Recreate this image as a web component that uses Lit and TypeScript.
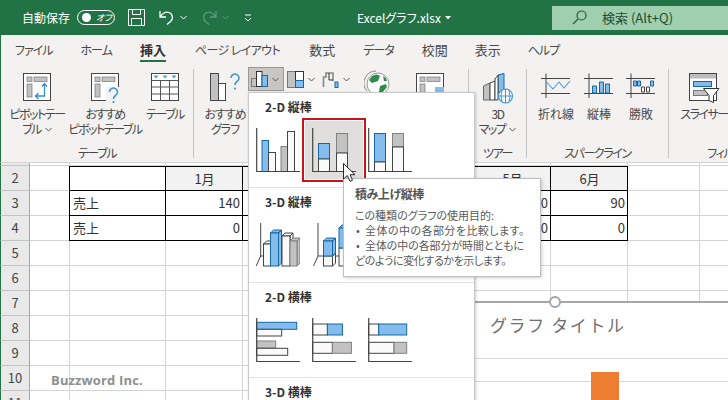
import { LitElement, html, css, svg } from 'lit';
import { customElement } from 'lit/decorators.js';

type Bar = [number, number, number, number, string];

const fills: Record<string, [string, string]> = {
  b: ['#84bcee', '#16699f'],
  g: ['#c2c2c2', '#808080'],
  w: ['#fafafa', '#444444'],
};

const flat = (bars: Bar[]) => html`
  <svg class="chart" width="44" height="44" viewBox="0 0 44 44">
    ${bars.map(([x, y, w, h, k]) => svg`<rect x=${x} y=${y} width=${w} height=${h} fill=${fills[k][0]} stroke=${fills[k][1]} stroke-width="1"/>`)}
    <path d="M.7 0V43.700H44" fill="none" stroke="#444" stroke-width="1.2"/>
  </svg>
`;

const box3d = ([x, y, w, h, k]: Bar) => svg`
  <path d="M${x} ${y}l3 -3h${w}l-3 3zM${x + w} ${y}l3 -3v${h}l-3 3z" fill=${fills[k][0]} stroke=${fills[k][1]} stroke-width="1"/>
  <rect x=${x} y=${y} width=${w} height=${h} fill=${fills[k][0]} stroke=${fills[k][1]} stroke-width="1"/>
`;

const solid = (ax: number, bars: Bar[]) => html`
  <svg class="chart" width="44" height="44" viewBox="0 0 44 44">
    <path d="M${ax} 0V33L${ax - 4.5} 43M${ax} 33H44" fill="none" stroke="#444" stroke-width="1"/>
    ${bars.map(box3d)}
  </svg>
`;

const chevron = html`<svg class="chev" width="7" height="5" viewBox="0 0 7 5"><path d="M.5 1l3 3 3-3" fill="none" stroke="#555" stroke-width="1"/></svg>`;

const frame = svg`
  <rect x=".5" y=".5" width="27" height="27" fill="#fff" stroke="#444"/>
  <rect x="4" y="4" width="5" height="4.500" fill="#c2c2c2" stroke="#777" stroke-width=".7"/>
  <rect x="11" y="4" width="13" height="4.500" fill="#c2c2c2" stroke="#777" stroke-width=".7"/>
  <rect x="4" y="11" width="5" height="13" fill="#c2c2c2" stroke="#777" stroke-width=".7"/>
`;

const icons = {
  pivot: html`<svg width="29" height="28" viewBox="0 0 29 28">${frame}<path d="M13 23H21.500V11M19 13.500l2.500-3 2.500 3M15.500 20l-3 3 3 3" fill="none" stroke="#2f8fd0" stroke-width="1.3"/></svg>`,
  recPivot: html`<svg width="29" height="32" viewBox="0 0 29 32">${frame}<rect x="15" y="14" width="13" height="14" fill="#f3f2f1"/><path d="M18.500 19a4 4 0 1 1 6 3.500c-1.500 1-2 2-2 3.500" fill="none" stroke="#3f97d4" stroke-width="1.6"/><circle cx="22.500" cy="29" r="1.100" fill="#3f97d4"/></svg>`,
  table: html`<svg width="29" height="28" viewBox="0 0 29 28">
    <rect x=".5" y=".5" width="27" height="27" fill="#fff" stroke="#444"/>
    <path d="M.5 7.500h27M.5 14h27M.5 21h27M9.500 7.500V28M18.500 7.500V28" stroke="#555" fill="none"/>
    <path d="M2.500 2.500h5l-2.500 3zM11.500 2.500h5l-2.500 3zM20.500 2.500h5l-2.500 3z" fill="#4d9cd2"/>
  </svg>`,
  recChart: html`<svg width="31" height="28" viewBox="0 0 31 28">
    <rect x=".5" y=".5" width="8" height="27" fill="#c2c2c2" stroke="#444"/>
    <rect x="8.500" y="10.500" width="7" height="17" fill="#fff" stroke="#444"/>
    <path d="M21 5a4 4 0 1 1 6 3.500c-1.500 1-2 2-2 3.500" fill="none" stroke="#3f97d4" stroke-width="1.6"/><circle cx="25" cy="15.500" r="1.100" fill="#3f97d4"/>
  </svg>`,
  column: html`<svg width="17" height="16" viewBox="0 0 17 16">
    <rect x=".5" y="7.500" width="5" height="8" fill="#c2c2c2" stroke="#777"/>
    <rect x="5.500" y=".5" width="5.500" height="15" fill="#fff" stroke="#333"/>
    <rect x="11" y="4.500" width="5.500" height="11" fill="#84bcee" stroke="#16699f"/>
  </svg>`,
  hierarchy: html`<svg width="17" height="17" viewBox="0 0 17 17">
    <rect x=".5" y=".5" width="8" height="16" fill="#c2c2c2" stroke="#777"/>
    <rect x="8.500" y=".5" width="8" height="9" fill="#fff" stroke="#333"/>
    <rect x="8.500" y="9.500" width="8" height="7" fill="#84bcee" stroke="#16699f"/>
  </svg>`,
  waterfall: html`<svg width="17" height="17" viewBox="0 0 17 17">
    <path d="M1.500 16V6H4V2H11V10" fill="none" stroke="#888" stroke-width="1.6"/>
    <path d="M7 2V9H11" fill="none" stroke="#333"/>
    <rect x="13" y="11" width="3" height="5.500" fill="#84bcee" stroke="#16699f"/>
  </svg>`,
  globe: html`<svg width="26" height="26" viewBox="0 0 26 26">
    <path d="M3 21A12 12 0 0 1 12 1" fill="none" stroke="#888"/>
    <circle cx="14" cy="14" r="11" fill="#fff" stroke="#999"/>
    <path d="M8 6q5-3 8 0l-2 5-6 2-3-3zM16 16l6-2 1 3-5 6-3-1zM19 6l3 2 1 3-3 0z" fill="#2f8b4a"/>
  </svg>`,
  mapChart: html`<svg width="29" height="28" viewBox="0 0 29 28">${frame}<rect x="19" y="14" width="9" height="14" fill="#84bcee"/></svg>`,
  map3d: html`<svg width="32" height="31" viewBox="0 0 32 31">
    <path d="M1.500 13L8 10V27H1.500z" fill="#c2c2c2" stroke="#666"/>
    <path d="M8 10L13 8V27H8z" fill="#fff" stroke="#444"/>
    <path d="M16 2L22 .5V20H16z" fill="#84bcee" stroke="#16699f"/>
    <path d="M13 6L16 2V27H13z" fill="#fff" stroke="#444"/>
    <circle cx="23.500" cy="23" r="7" fill="#fff" stroke="#3f97d4" stroke-width="1.2"/>
    <path d="M16.500 23h14M23.500 16v14M20 17.500q-2 5.500 0 11M27 17.500q2 5.500 0 11" fill="none" stroke="#3f97d4"/>
  </svg>`,
  line: html`<svg width="30" height="26" viewBox="0 0 30 26">
    <path d="M0 5.500H29M0 20.500H29M5 .5V25" fill="none" stroke="#444"/>
    <path d="M5.500 9L12 16 18 9 23 15 29 8" fill="none" stroke="#4d9cd2" stroke-width="1.1"/>
  </svg>`,
  spark: html`<svg width="30" height="26" viewBox="0 0 30 26">
    <path d="M0 5.500H29M0 20.500H29M5 .5V25" fill="none" stroke="#444"/>
    <path d="M8.500 13h4v7h-4zM15.500 9h4v11h-4zM21.500 11h4v9h-4z" fill="#84bcee" stroke="#16699f"/>
  </svg>`,
  winloss: html`<svg width="30" height="26" viewBox="0 0 30 26">
    <path d="M0 5.500H29M0 20.500H29M5 .5V25" fill="none" stroke="#444"/>
    <path d="M7.500 8h3v5h-3zM11.500 8h3v5h-3zM24.500 8h3v5h-3z" fill="#84bcee" stroke="#16699f"/>
    <path d="M15.500 14h3v5h-3zM20.500 14h3v5h-3z" fill="#fff" stroke="#444"/>
  </svg>`,
  slicer: html`<svg width="31" height="30" viewBox="0 0 31 30">
    <rect x=".5" y=".5" width="27" height="27" fill="#fff" stroke="#444"/>
    <rect x="1" y="1" width="26" height="4.500" fill="#bdbdbd"/>
    <rect x="4.500" y="8.500" width="18" height="5" fill="#84bcee" stroke="#16699f"/>
    <rect x="4.500" y="17.500" width="14" height="5" fill="#c2c2c2" stroke="#777"/>
    <path d="M14.500 15.500H30L24.500 22.500V29.500L20 27.500V22.500z" fill="#fff" stroke="#333"/>
  </svg>`,
};

const sections = [
  {
    title: '2-D 縦棒',
    items: [
      flat([[6, 12.5, 6.5, 31, 'b'], [12.5, 24.5, 7, 19, 'w'], [25, 18.5, 6.5, 25, 'g'], [31.5, 3.5, 7, 40, 'w']]),
      flat([[6.5, 15.5, 11, 15.5, 'b'], [6.5, 31, 11, 12.5, 'w'], [24.5, 5.5, 11, 19.5, 'g'], [24.5, 25, 11, 18.5, 'w']]),
      flat([[6.5, 5.5, 11, 28.5, 'b'], [6.5, 34, 11, 9.5, 'w'], [24.5, 5.5, 11, 13.5, 'g'], [24.5, 19, 11, 24.5, 'w']]),
    ],
  },
  {
    title: '3-D 縦棒',
    items: [
      solid(4.7, [[7.5, 21, 7, 22, 'w'], [14.5, 10, 8, 33, 'b'], [26, 13, 8, 30, 'w'], [34, 18, 7, 25, 'g']]),
      solid(6, [[11.5, 33, 9, 10, 'w'], [11.5, 18, 9, 15, 'b'], [27, 25, 9, 18, 'w'], [27, 5, 9, 20, 'b']]),
      solid(6, [[11.5, 33, 9, 10, 'w'], [11.5, 8, 9, 25, 'b'], [27, 20, 9, 23, 'w'], [27, 8, 9, 12, 'g']]),
    ],
  },
  {
    title: '2-D 横棒',
    items: [
      flat([[.7, 4.3, 40, 7, 'b'], [.7, 11.3, 25, 6.7, 'w'], [.7, 23, 19, 7, 'g'], [.7, 30.3, 31, 7, 'w']]),
      flat([[.7, 6, 14.7, 11, 'w'], [15.4, 6, 15, 11, 'b'], [.7, 24.3, 19.7, 11, 'w'], [20.4, 24.3, 19, 11, 'g']]),
      flat([[.7, 6, 10, 11, 'w'], [10.7, 6, 28, 11, 'b'], [.7, 24.3, 25.4, 11, 'w'], [26.1, 24.3, 12.6, 11, 'g']]),
    ],
  },
  { title: '3-D 横棒', items: [] },
];

const tabs = [
  ['ファイル', 'kana'],
  ['ホーム', 'kana'],
  ['挿入', 'kanji active'],
  ['ページ レイアウト', 'kana page'],
  ['数式', 'kanji'],
  ['データ', 'kana'],
  ['校閲', 'kanji'],
  ['表示', 'kanji tight'],
  ['ヘルプ', 'kana tight'],
];

const columns = ['A', 'B', 'C', 'D', 'E', 'F', 'G', 'H', 'I', 'J'];
const table: Record<number, string[]> = {
  2: ['', '1月', '2月', '3月', '4月', '5月', '6月'],
  3: ['売上', '140', '', '', '', '0', '90'],
  4: ['売上', '0', '', '', '', '0', '0'],
};

@customElement('app-root')
export class AppRoot extends LitElement {
  static styles = css`
    :host {
      display: block;
      width: 728px;
      height: 400px;
      position: relative;
      overflow: hidden;
      background: #fff;
      color: #484848;
      font-family: 'Noto Sans CJK JP', 'Noto Sans', sans-serif;
      font-size: 12px;
      font-feature-settings: 'palt';
    }
    .titlebar {
      height: 35px;
      background: #217346;
      color: #fff;
      display: flex;
      align-items: center;
      white-space: nowrap;
    }
    .autosave { margin-left: 22px; width: 55px; }
    .toggle {
      width: 38px;
      height: 15px;
      box-sizing: border-box;
      border: 1px solid #fff;
      border-radius: 8px;
      display: flex;
      align-items: center;
      gap: 5px;
      padding-left: 4px;
      font-size: 9px;
      font-style: italic;
    }
    .toggle i { width: 9px; height: 9px; border-radius: 50%; background: #fff; }
    .quick { display: flex; align-items: center; margin-left: 13px; }
    .save { margin-right: 13px; }
    .undo-caret { margin-left: 5px; margin-right: 14px; }
    .redo-caret { margin-left: 4px; margin-right: 15px; }
    .filename { margin-left: 105px; width: 88px; }
    .search {
      margin-left: auto;
      width: 176px;
      height: 24px;
      background: #9fcfae;
      color: #1e4d33;
      display: flex;
      align-items: center;
      gap: 15px;
      padding-left: 20px;
      box-sizing: border-box;
      font-size: 13px;
    }
    .tabs {
      height: 29px;
      background: #f3f2f1;
      display: flex;
      gap: 28px;
      padding-left: 14px;
      border-left: 1px solid #217346;
      white-space: nowrap;
      line-height: 29px;
    }
    .tab { position: relative; height: 29px; }
    .tab.kana { letter-spacing: -1px; }
    .tab.kanji { font-size: 13px; }
    .tab.page { letter-spacing: -0.6px; padding: 0 1px; }
    .tab.tight { margin-left: -1px; }
    .tab.active { font-weight: 700; color: #333; }
    .tab.active::after {
      content: '';
      position: absolute;
      left: 0;
      right: 0;
      bottom: 2px;
      height: 2px;
      background: #217346;
    }
    .ribbon {
      height: 98px;
      background: #f3f2f1;
      display: flex;
      border-left: 1px solid #217346;
      border-bottom: 1px solid #d6d4d2;
    }
    .group { display: flex; flex-direction: column; height: 98px; flex: none; }
    .group-items { flex: 1; display: flex; min-height: 0; }
    .group-label { height: 18px; line-height: 17px; text-align: center; white-space: nowrap; letter-spacing: -1.4px; }
    .sep { width: 1px; margin: 5px 0 4px; background: #c8c6c4; flex: none; }
    .g1 { width: 192px; }
    .g1 .group-items { padding-left: 6px; }
    .g2 { width: 274px; }
    .g2 .group-items { padding-left: 7px; }
    .g3 { width: 57px; }
    .g4 { width: 141px; }
    .g4 .group-items { padding-left: 10px; gap: 6px; }
    .g5 { width: 122px; }
    .g5 .group-items { padding-left: 6px; }
    .btn {
      flex: none;
      display: flex;
      flex-direction: column;
      align-items: center;
      padding-top: 9px;
      line-height: 15px;
      white-space: nowrap;
      box-sizing: border-box;
      letter-spacing: -1.5px;
    }
    .btn.plain { letter-spacing: 0; }
    .btn.sparse { letter-spacing: -1px; }
    .btn svg { display: block; }
    .w36 { width: 36px; }
    .w38 { width: 38px; }
    .w44 { width: 44px; }
    .w48 { width: 48px; }
    .w52 { width: 52px; }
    .w54 { width: 54px; }
    .w57 { width: 57px; }
    .w58 { width: 58px; }
    .w60 { width: 60px; }
    .w76 { width: 76px; }
    .globe { padding-top: 6px; }
    .icon { height: 33px; display: flex; justify-content: center; }
    .btn .chev { display: inline-block; margin-left: 4px; vertical-align: 2px; }
    .small-row { display: flex; gap: 3px; padding-top: 3px; height: 28px; align-items: flex-start; flex: none; margin-left: -1px; width: 102px; }
    .small {
      height: 24px;
      box-sizing: border-box;
      display: flex;
      align-items: center;
      gap: 4px;
    }
    .small.on { width: 36px; padding-left: 2px; background: #c8c6c4; border: 1px solid #9b9997; }
    .small.far { margin-left: 4px; }
    .sheet {
      display: grid;
      grid-template-columns: 30px 40px 96px 77px 77px 77px 77px 77px 77px 72px 29px;
      grid-template-rows: 3px repeat(10, 25px);
      font-size: 13px;
      font-feature-settings: normal;
      line-height: 24px;
      color: #333;
    }
    .cell {
      box-sizing: border-box;
      border-right: 1px solid #d4d4d4;
      border-bottom: 1px solid #d4d4d4;
      padding: 0 2px 0 3px;
      overflow: hidden;
      white-space: nowrap;
    }
    .head {
      background: #e9e9e9;
      border-left: 1px solid #217346;
      border-right: 1px solid #a6a6a6;
      border-bottom: 1px solid #c4c4c4;
      text-align: center;
      color: #444;
      padding: 0;
    }
    .num { text-align: right; }
    .cal { text-align: center; background: #f2f2f2; }
    .tbl { border-right: 1px solid #000; border-bottom: 1px solid #000; }
    .tbl.first { border-left: 1px solid #000; margin-left: -1px; }
    .tbl.top { border-top: 1px solid #000; line-height: 23px; }
    .mark {
      position: absolute;
      left: 51px;
      top: 371px;
      font-family: 'Open Sans', sans-serif;
      font-weight: 700;
      font-size: 13px;
      letter-spacing: 0.15px;
      line-height: 18px;
      color: #8f8f8f;
      font-feature-settings: normal;
    }
    .chart-object {
      position: absolute;
      left: 400px;
      right: 0;
      top: 301px;
      bottom: 0;
      background: #fff;
      border-top: 2px solid #a6a6a6;
    }
    .handle {
      position: absolute;
      left: 149px;
      top: -7px;
      width: 12px;
      height: 12px;
      box-sizing: border-box;
      border: 2px solid #a6a6a6;
      border-radius: 50%;
      background: #fff;
    }
    .chart-title {
      padding: 9px 0 0 90px;
      height: 55px;
      box-sizing: border-box;
      font-size: 17px;
      letter-spacing: 1.6px;
      line-height: 26px;
      color: #707070;
      white-space: nowrap;
      font-feature-settings: normal;
    }
    .plot {
      height: 44px;
      background: repeating-linear-gradient(#d9d9d9 0 1px, transparent 1px 22.5px);
      position: relative;
    }
    .bar {
      position: absolute;
      left: 191px;
      top: 14px;
      bottom: 0;
      width: 28px;
      background: #ed7d31;
    }
    .menu {
      position: absolute;
      left: 248px;
      top: 92px;
      width: 227px;
      bottom: -2px;
      background: #fff;
      border: 1px solid #c8c8c8;
      box-sizing: border-box;
      box-shadow: 1px 1px 3px rgba(0, 0, 0, 0.2);
    }
    .section {
      height: 95px;
      box-sizing: border-box;
      padding: 6px 0 0 7px;
      border-bottom: 1px solid #e1e1e1;
    }
    .section h3 {
      margin: 0 0 14px 9px;
      font-size: 12px;
      line-height: 15px;
      font-weight: 700;
      color: #333;
    }
    .charts { display: flex; gap: 12px; }
    .chart { display: block; }
    .slot { width: 44px; height: 44px; position: relative; z-index: 0; }
    .slot.sel::before {
      content: '';
      position: absolute;
      inset: -10px;
      z-index: -1;
      background: #e0dfde;
      border: 2.5px solid #c9141c;
      box-shadow: inset 0 0 0 1px #fff;
    }
    .cursor { position: absolute; left: 343px; top: 163px; z-index: 3; }
    .tip {
      position: absolute;
      left: 343px;
      top: 178px;
      width: 198px;
      height: 99px;
      box-sizing: border-box;
      background: #fff;
      border: 1px solid #bfbfbf;
      box-shadow: 1px 1px 3px rgba(0, 0, 0, 0.2);
      padding: 7px 0 0 11px;
      font-size: 11px;
      line-height: 15px;
      color: #5a5a5a;
      white-space: nowrap;
      z-index: 2;
    }
    .tip b { display: block; font-size: 12px; letter-spacing: -0.5px; line-height: 16px; margin-bottom: 6px; color: #555; }
    .tip .l2 { letter-spacing: 0.45px; }
    .tip .l3 { letter-spacing: -0.1px; }
    .tip .l4 { letter-spacing: -0.4px; }
    .tip .dot { display: inline-block; width: 10px; letter-spacing: 0; padding-left: 1px; box-sizing: border-box; }
  `;

  render() {
    return html`
      <div class="titlebar">
        <span class="autosave">自動保存</span>
        <span class="toggle"><i></i>オフ</span>
        <span class="quick">
          <svg class="save" width="17" height="17" viewBox="0 0 17 17" fill="none" stroke="#fff"><path d="M.5.5h16v16H.5zM4.500.5v5h8v-5M3.500 16.500v-7h10v7"/></svg>
          <svg width="17" height="16" viewBox="0 0 17 16" fill="none" stroke="#fff" stroke-width="1.3"><path d="M2 1v6h6M2.500 6.500C5 3 8 1.500 11 2.500c4 1.500 4.500 6.500 1.500 9l-3.500 3"/></svg>
          <svg class="undo-caret" width="7" height="5" viewBox="0 0 7 5" fill="none" stroke="#fff"><path d="M.5 1l3 3 3-3"/></svg>
          <svg width="17" height="16" viewBox="0 0 17 16" fill="none" stroke="#5c9b7a" stroke-width="1.3"><path d="M15 1v6H9M14.500 6.500C12 3 9 1.500 6 2.500c-4 1.500-4.500 6.500-1.500 9l3.500 3"/></svg>
          <svg class="redo-caret" width="7" height="5" viewBox="0 0 7 5" fill="none" stroke="#5c9b7a"><path d="M.5 1l3 3 3-3"/></svg>
          <svg width="8" height="8" viewBox="0 0 8 8" fill="none" stroke="#fff"><path d="M1 1h6M1 4l3 3 3-3"/></svg>
        </span>
        <span class="filename">Excelグラフ.xlsx</span>
        <svg width="6" height="4" viewBox="0 0 6 4"><path d="M0 0h6L3 3.500z" fill="#fff"/></svg>
        <div class="search">
          <svg width="15" height="15" viewBox="0 0 15 15" fill="none" stroke="#1e5c3a" stroke-width="1.2"><circle cx="9.500" cy="5.500" r="4.500"/><path d="M6 9l-5 5"/></svg>
          <span>検索 (Alt+Q)</span>
        </div>
      </div>

      <div class="tabs">
        ${tabs.map(([t, cls]) => html`<span class="tab ${cls}">${t}</span>`)}
      </div>

      <div class="ribbon">
        <div class="group g1">
          <div class="group-items">
            <div class="btn w60"><div class="icon">${icons.pivot}</div>ピボットテー<span>ブル${chevron}</span></div>
            <div class="btn w76"><div class="icon">${icons.recPivot}</div>おすすめ<span>ピボットテーブル</span></div>
            <div class="btn w44"><div class="icon">${icons.table}</div>テーブル</div>
          </div>
          <div class="group-label">テーブル</div>
        </div>
        <div class="sep"></div>
        <div class="group g2">
          <div class="group-items">
            <div class="btn w48 sparse"><div class="icon">${icons.recChart}</div>おすすめ<span>グラフ</span></div>
            <div class="small-row">
              <div class="small on">${icons.column}${chevron}</div>
              <div class="small">${icons.hierarchy}${chevron}</div>
              <div class="small far">${icons.waterfall}${chevron}</div>
            </div>
            <div class="btn w54 globe"><div class="icon">${icons.globe}</div></div>
            <div class="btn w52"><div class="icon">${icons.mapChart}</div></div>
          </div>
          <div class="group-label"></div>
        </div>
        <div class="sep"></div>
        <div class="group g3">
          <div class="group-items">
            <div class="btn w57"><div class="icon">${icons.map3d}</div>3D<span>マップ${chevron}</span></div>
          </div>
          <div class="group-label">ツアー</div>
        </div>
        <div class="sep"></div>
        <div class="group g4">
          <div class="group-items">
            <div class="btn w38 plain"><div class="icon">${icons.line}</div>折れ線</div>
            <div class="btn w36 plain"><div class="icon">${icons.spark}</div>縦棒</div>
            <div class="btn w36 plain"><div class="icon">${icons.winloss}</div>勝敗</div>
          </div>
          <div class="group-label">スパークライン</div>
        </div>
        <div class="sep"></div>
        <div class="group g5">
          <div class="group-items">
            <div class="btn w58"><div class="icon">${icons.slicer}</div>スライサー</div>
          </div>
          <div class="group-label">フィルター</div>
        </div>
      </div>

      <div class="sheet">
        ${this.renderStub()}
        ${[2, 3, 4, 5, 6, 7, 8, 9, 10, 11].map((r) => this.renderRow(r))}
      </div>
      <div class="mark">Buzzword Inc.</div>

      <div class="chart-object">
        <div class="handle"></div>
        <div class="chart-title">グラフ タイトル</div>
        <div class="plot"><div class="bar"></div></div>
      </div>

      <div class="menu">
        ${sections.map(
          (s, i) => html`
            <div class="section">
              <h3>${s.title}</h3>
              <div class="charts">
                ${s.items.map((item, j) => html`<div class="slot ${i === 0 && j === 1 ? 'sel' : ''}">${item}</div>`)}
              </div>
            </div>
          `
        )}
      </div>
      <svg class="cursor" width="13" height="19" viewBox="0 0 13 19"><path d="M.5.5V16L4.300 12.500 7 18.300 9.500 17.200 7 11.700H12z" fill="#fff" stroke="#111" stroke-width=".9"/></svg>
      <div class="tip">
        <b>積み上げ縦棒</b>
        <div>この種類のグラフの使用目的:</div>
        <div class="l2"><span class="dot">•</span>全体の中の各部分を比較します。</div>
        <div class="l3"><span class="dot">•</span>全体の中の各部分が時間とともに</div>
        <div class="l4">どのように変化するかを示します。</div>
      </div>
    `;
  }

  renderStub() {
    return html`<div class="cell head"></div>${columns.map(() => html`<div class="cell"></div>`)}`;
  }

  renderRow(r: number) {
    const data = table[r];
    return html`
      <div class="cell head">${r}</div>
      ${columns.map((_, c) => {
        const inTable = data && c >= 1 && c <= 7;
        const v = inTable ? data[c - 1] : '';
        const cls = [
          'cell',
          inTable ? 'tbl' : '',
          inTable && c === 1 ? 'first' : '',
          inTable && r === 2 ? 'top' : '',
          inTable && r === 2 && c > 1 ? 'cal' : '',
          inTable && r > 2 && c > 1 ? 'num' : '',
        ].join(' ');
        return html`<div class=${cls}>${v}</div>`;
      })}
    `;
  }
}
